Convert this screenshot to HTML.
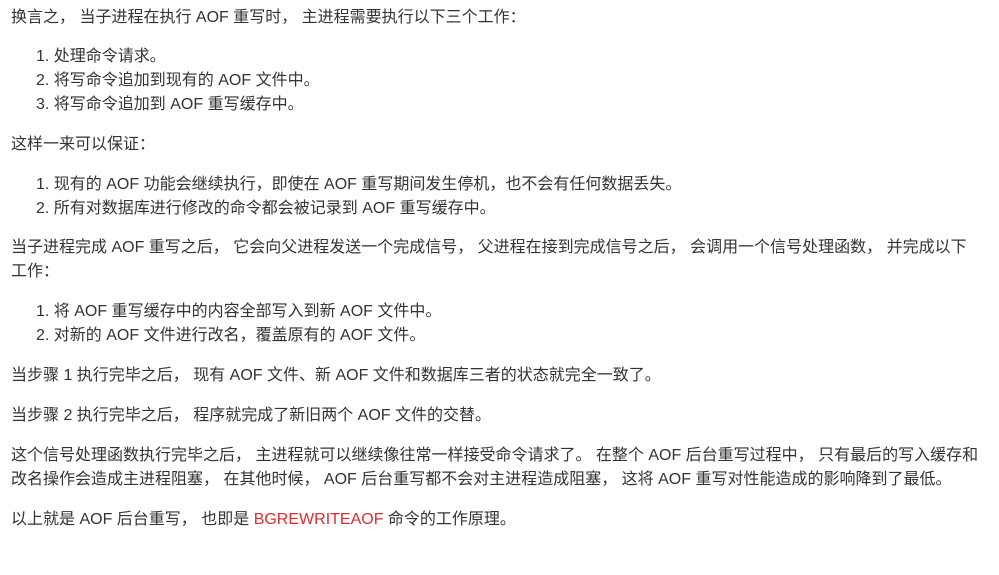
<html><head><style>
body{margin:0;width:999px;height:575px;background:#fff;font-family:"Liberation Sans","Noto Sans CJK SC",sans-serif;font-size:16px;color:#333;}
.l{position:absolute;left:11px;line-height:24px;white-space:nowrap;}
.i{left:36px;}
.r{color:#e02a2f;}
</style></head><body>
<div class="l" style="top:6px">换言之， 当子进程在执行 AOF 重写时， 主进程需要执行以下三个工作：</div>
<div class="l i" style="top:45px">1. 处理命令请求。</div>
<div class="l i" style="top:69px">2. 将写命令追加到现有的 AOF 文件中。</div>
<div class="l i" style="top:93px">3. 将写命令追加到 AOF 重写缓存中。</div>
<div class="l" style="top:133px">这样一来可以保证：</div>
<div class="l i" style="top:173px">1. 现有的 AOF 功能会继续执行，即使在 AOF 重写期间发生停机，也不会有任何数据丢失。</div>
<div class="l i" style="top:197px">2. 所有对数据库进行修改的命令都会被记录到 AOF 重写缓存中。</div>
<div class="l" style="top:236px">当子进程完成 AOF 重写之后， 它会向父进程发送一个完成信号， 父进程在接到完成信号之后， 会调用一个信号处理函数， 并完成以下</div>
<div class="l" style="top:260px">工作：</div>
<div class="l i" style="top:300px">1. 将 AOF 重写缓存中的内容全部写入到新 AOF 文件中。</div>
<div class="l i" style="top:324px">2. 对新的 AOF 文件进行改名，覆盖原有的 AOF 文件。</div>
<div class="l" style="top:364px">当步骤 1 执行完毕之后， 现有 AOF 文件、新 AOF 文件和数据库三者的状态就完全一致了。</div>
<div class="l" style="top:404px">当步骤 2 执行完毕之后， 程序就完成了新旧两个 AOF 文件的交替。</div>
<div class="l" style="top:444px">这个信号处理函数执行完毕之后， 主进程就可以继续像往常一样接受命令请求了。 在整个 AOF 后台重写过程中， 只有最后的写入缓存和</div>
<div class="l" style="top:468px">改名操作会造成主进程阻塞， 在其他时候， AOF 后台重写都不会对主进程造成阻塞， 这将 AOF 重写对性能造成的影响降到了最低。</div>
<div class="l" style="top:508px">以上就是 AOF 后台重写， 也即是 <span class="r">BGREWRITEAOF</span> 命令的工作原理。</div>
</body></html>
